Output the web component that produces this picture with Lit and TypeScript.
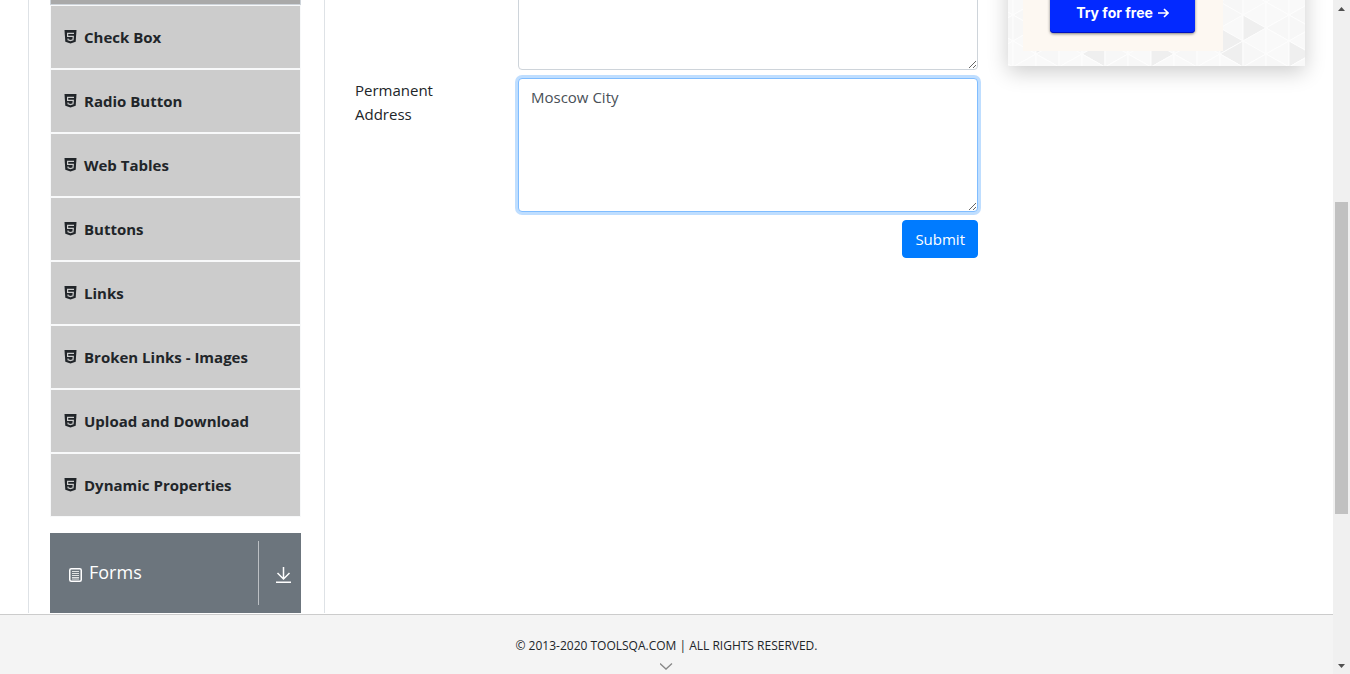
import { LitElement, html, css, svg, nothing } from "lit";
import { customElement } from "lit/decorators.js";

const MENU = [
  "",
  "Check Box",
  "Radio Button",
  "Web Tables",
  "Buttons",
  "Links",
  "Broken Links - Images",
  "Upload and Download",
  "Dynamic Properties",
];

const html5Icon = html`<svg class="icon" viewBox="0 0 13 14" aria-hidden="true">
  <path fill="#212529" d="M.5 0h12l-.8 11.800L6.500 13.500l-5.200-1.700z" />
  <path fill="none" stroke="#ccc" stroke-width="1.200" d="M10 3.400H3.600v3h5.700l-.3 3.400-2.500.8-2.400-.8-.1-1.300" />
</svg>`;

@customElement("side-menu")
export class SideMenu extends LitElement {
  static styles = css`
    :host {
      display: block;
      padding: 5px 23px 0 21px;
      border: solid #dee2e6;
      border-width: 0 1px;
    }
    .list {
      list-style: none;
      margin: 0 0 16px;
      padding: 0;
    }
    .link {
      display: flex;
      align-items: center;
      gap: 7px;
      height: 62px;
      padding-left: 13px;
      border: 1px solid #f8f9fa;
      background: #ccc;
      color: #212529;
      font-size: 15px;
      font-weight: 700;
      text-decoration: none;
    }
    .active {
      background: #a9a9a9;
      border-color: #ced4da;
    }
    .icon {
      width: 13px;
      height: 14px;
      flex: none;
    }
    .group {
      display: flex;
      align-items: center;
      width: 100%;
      height: 80px;
      padding: 0 9px 0 19px;
      border: 0;
      background: #6c757d;
      color: #fff;
      font: inherit;
      font-size: 18px;
      text-align: left;
    }
    .group-icon {
      width: 13px;
      height: 14px;
      margin: 4px 7px 0 0;
    }
    .group-name {
      flex: 1;
      padding-bottom: 2px;
    }
    .toggle {
      display: flex;
      align-items: center;
      height: 64px;
      padding: 4px 0 0 17px;
      box-sizing: border-box;
      border-left: 1px solid #bcc0c4;
    }
    .toggle svg {
      width: 16px;
      height: 16px;
    }
  `;

  render() {
    return html`
      <nav aria-label="Elements">
        <ul class="list">
          ${MENU.map(
            (name) => html`<li>
              <a href="#" class=${name ? "link" : "link active"} aria-label=${name ? nothing : "Text Box"}
                >${html5Icon}<span>${name}</span></a
              >
            </li>`
          )}
        </ul>
        <button class="group" type="button">
          <svg class="group-icon" viewBox="0 0 13 14" fill="none" stroke="#fff" aria-hidden="true">
            <rect x=".75" y=".75" width="11.500" height="12.500" rx="1.500" stroke-width="1.500" />
            <path d="M3 3.500h7M3 5.500h7M3 7.500h7M3 9.500h7M3 11h7" stroke-width=".8" />
          </svg>
          <span class="group-name">Forms</span>
          <span class="toggle">
            <svg viewBox="0 0 16 16" fill="none" stroke="#fff" stroke-width="1.500" aria-hidden="true">
              <path d="M7.500 0v12M1.500 6l6 6 6-6M0 15.200h15" />
            </svg>
          </span>
        </button>
      </nav>
    `;
  }
}

const STEP = 23;
const SIDE = 26;
const SHADED = new Set(["1,4,r", "3,4,l", "6,4,r", "9,4,l", "10,3,r", "9,4,r", "8,2,l", "12,4,r", "9,2,r"]);

function triangles() {
  const out = [];
  for (let c = -1; c < 14; c++) {
    const x = 5 + c * STEP;
    const shift = c % 2 === 0 ? 1 : -12;
    for (let r = 0; r < 7; r++) {
      const y = shift + r * SIDE;
      const h = c % 2 === 0 ? 13 : 13;
      const tone = (key: string, n: number) => (SHADED.has(key) ? "#efefef" : n % 3 === 0 ? "#f7f7f7" : "#f9f9f9");
      out.push(svg`
        <polygon points="${x},${y} ${x},${y + SIDE} ${x + STEP},${y + h}" fill=${tone(`${c},${r},r`, c + r * 2)} />
        <polygon points="${x + STEP},${y + h} ${x + STEP},${y + SIDE + h} ${x},${y + SIDE}" fill=${tone(`${c},${r},l`, c + r + 1)} />`);
    }
  }
  return out;
}

@customElement("promo-card")
export class PromoCard extends LitElement {
  static styles = css`
    :host {
      display: grid;
      height: 130px;
      overflow: hidden;
      background: #f9f9f9;
      box-shadow: 0 6px 20px rgba(0, 0, 0, 0.2);
    }
    .pattern,
    .panel {
      grid-area: 1 / 1;
    }
    .pattern {
      width: 100%;
      height: 130px;
    }
    .panel {
      z-index: 1;
      display: flex;
      align-items: flex-end;
      width: 200px;
      height: 115px;
      margin-left: 15px;
      padding: 0 0 18px 27px;
      box-sizing: border-box;
      background: #fdf8f2;
    }
    .cta {
      display: flex;
      align-items: center;
      justify-content: center;
      gap: 5px;
      width: 145px;
      height: 40px;
      border-radius: 4px;
      background: #0329ff;
      box-shadow: inset 0 -1px 0 #0010c0, 0 1px 3px rgba(0, 0, 0, 0.5);
      color: #fff;
      font: 700 14px/20px Inter, sans-serif;
      text-decoration: none;
    }
    .arrow {
      width: 11px;
      height: 10px;
    }
  `;

  render() {
    return html`
      <svg class="pattern" viewBox="0 0 297 130" preserveAspectRatio="xMinYMax slice" stroke="#fdfdfd" aria-hidden="true">
        ${triangles()}
      </svg>
      <div class="panel">
        <a class="cta" href="#"
          >Try for free
          <svg class="arrow" viewBox="0 0 11 10" fill="none" stroke="#fff" stroke-width="1.600" aria-hidden="true">
            <path d="M0 5h10M6 1l4 4-4 4" /></svg
        ></a>
      </div>
    `;
  }
}

@customElement("address-form")
export class AddressForm extends LitElement {
  static styles = css`
    :host {
      display: block;
      padding: 0 30px;
      font-size: 15px;
    }
    .row {
      display: grid;
      grid-template-columns: 163fr 460fr;
      align-items: start;
      margin-bottom: 8px;
    }
    .label {
      padding-right: 40px;
    }
    .area {
      display: block;
      grid-column: 2;
      width: 100%;
      box-sizing: border-box;
      padding: 6px 12px;
      border: 1px solid #ced4da;
      border-radius: 4px;
      outline: 0;
      background: #fff;
      color: #495057;
      font: inherit;
      resize: vertical;
    }
    .focused {
      border-color: #80bdff;
      box-shadow: 0 0 0 3px rgba(0, 123, 255, 0.25);
    }
    .actions {
      display: flex;
      justify-content: flex-end;
    }
    .submit {
      padding: 6px 12px;
      border: 1px solid #007bff;
      border-radius: 4px;
      background: #007bff;
      color: #fff;
      font: inherit;
    }
  `;

  render() {
    return html`
      <form>
        <div class="row">
          <textarea class="area" aria-label="Current Address" rows="5"></textarea>
        </div>
        <div class="row">
          <label class="label" for="permanent">Permanent Address</label>
          <textarea class="area focused" id="permanent" rows="5" .value=${"Moscow City"}></textarea>
        </div>
        <div class="actions"><button class="submit" type="button">Submit</button></div>
      </form>
    `;
  }
}

@customElement("app-root")
export class AppRoot extends LitElement {
  static styles = css`
    :host {
      display: grid;
      grid-template-columns: 1fr 17px;
      height: 100vh;
      overflow: hidden;
      background: #fff;
      color: #212529;
      font: 400 16px/24px "Open Sans", "Noto Sans", sans-serif;
    }
    .page {
      display: flex;
      flex-direction: column;
      min-width: 0;
      min-height: 0;
    }
    .view {
      flex: 1;
      min-height: 0;
      overflow: hidden;
    }
    .columns {
      display: grid;
      grid-template-columns: 297fr 683fr 297fr;
      align-items: start;
      margin-top: -64px;
      padding: 0 28px;
    }
    .footer {
      display: flex;
      flex-direction: column;
      align-items: center;
      gap: 7px;
      padding-top: 21px;
      box-sizing: border-box;
      border-top: 1px solid #ccc;
      background: #f4f4f4;
      font-size: 12px;
      line-height: 20px;
      flex: 0 0 60px;
    }
    .chevron {
      width: 14px;
      height: 7px;
    }
    .scrollbar {
      display: flex;
      flex-direction: column;
      align-items: center;
      background: #f0f0f0;
    }
    .step {
      display: flex;
      align-items: center;
      justify-content: center;
      width: 17px;
      height: 17px;
    }
    .step svg {
      width: 7px;
      height: 4px;
    }
    .before {
      flex: 185;
    }
    .thumb {
      flex: 312;
      width: 13px;
      background: #c1c1c1;
    }
    .after {
      flex: 143;
    }
  `;

  render() {
    return html`
      <div class="page">
        <main class="view">
          <div class="columns">
            <side-menu></side-menu>
            <address-form></address-form>
            <promo-card></promo-card>
          </div>
        </main>
        <footer class="footer">
          <span>© 2013-2020 TOOLSQA.COM | ALL RIGHTS RESERVED.</span>
          <svg class="chevron" viewBox="0 0 14 7" fill="none" stroke="#888" stroke-width="1.300" aria-hidden="true">
            <path d="M0 .5l6 5.500 6-5.500" />
          </svg>
        </footer>
      </div>
      <div class="scrollbar" aria-hidden="true">
        <span class="step"><svg viewBox="0 0 7 4"><path fill="#505050" d="M0 4l3.500-4L7 4z" /></svg></span>
        <span class="before"></span>
        <span class="thumb"></span>
        <span class="after"></span>
        <span class="step"><svg viewBox="0 0 7 4"><path fill="#505050" d="M0 0l3.500 4L7 0z" /></svg></span>
      </div>
    `;
  }
}
